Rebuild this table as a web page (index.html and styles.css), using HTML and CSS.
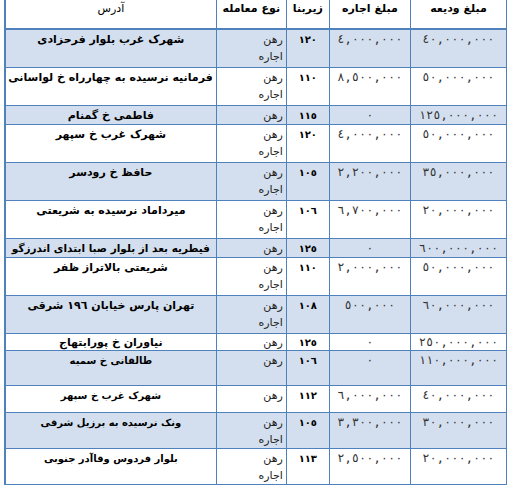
FILE: index.html
```html
<!DOCTYPE html>
<html lang="fa" dir="rtl">
<head>
<meta charset="utf-8">
<link rel="stylesheet" href="styles.css">
</head>
<body>
<table class="grid">
  <colgroup>
    <col class="c-dep"><col class="c-rent"><col class="c-area"><col class="c-type"><col class="c-addr">
  </colgroup>
  <thead>
    <tr class="head">
      <th>مبلغ ودیعه</th><th>مبلغ اجاره</th><th>زیربنا</th><th>نوع معامله</th><th class="plain">آدرس</th>
    </tr>
  </thead>
  <tbody>
    <tr class="alt two"><td class="num">٤٠,٠٠٠,٠٠٠</td><td class="num">٤,٠٠٠,٠٠٠</td><td class="area">١٢٠</td><td class="type">رهن<br>اجاره</td><td class="addr">شهرک غرب بلوار فرحزادی</td></tr>
    <tr class="two"><td class="num">٥٠,٠٠٠,٠٠٠</td><td class="num">٨,٥٠٠,٠٠٠</td><td class="area">١١٠</td><td class="type">رهن<br>اجاره</td><td class="addr">فرمانیه نرسیده به چهارراه خ لواسانی</td></tr>
    <tr class="alt one"><td class="num">١٢٥,٠٠٠,٠٠٠</td><td class="num">٠</td><td class="area">١١٥</td><td class="type">رهن</td><td class="addr">فاطمی خ گمنام</td></tr>
    <tr class="two"><td class="num">٥٠,٠٠٠,٠٠٠</td><td class="num">٤,٠٠٠,٠٠٠</td><td class="area">١٢٠</td><td class="type">رهن<br>اجاره</td><td class="addr">شهرک غرب خ سپهر</td></tr>
    <tr class="alt two"><td class="num">٣٥,٠٠٠,٠٠٠</td><td class="num">٢,٢٠٠,٠٠٠</td><td class="area">١٠٥</td><td class="type">رهن<br>اجاره</td><td class="addr">حافظ خ رودسر</td></tr>
    <tr class="two"><td class="num">٢٠,٠٠٠,٠٠٠</td><td class="num">٦,٧٠٠,٠٠٠</td><td class="area">١٠٦</td><td class="type">رهن<br>اجاره</td><td class="addr">میرداماد نرسیده به شریعتی</td></tr>
    <tr class="alt one"><td class="num">٦٠٠,٠٠٠,٠٠٠</td><td class="num">٠</td><td class="area">١٢٥</td><td class="type">رهن</td><td class="addr fit">فیطریه بعد از بلوار صبا ابتدای اندرزگو</td></tr>
    <tr class="two"><td class="num">٥٠,٠٠٠,٠٠٠</td><td class="num">٢,٠٠٠,٠٠٠</td><td class="area">١١٠</td><td class="type">رهن<br>اجاره</td><td class="addr">شریعتی بالاتراز ظفر</td></tr>
    <tr class="alt two"><td class="num">٦٠,٠٠٠,٠٠٠</td><td class="num">٥٠٠,٠٠٠</td><td class="area">١٠٨</td><td class="type">رهن<br>اجاره</td><td class="addr">تهران پارس خیابان ١٩٦ شرقی</td></tr>
    <tr class="short"><td class="num">٢٥٠,٠٠٠,٠٠٠</td><td class="num">٠</td><td class="area">١٢٥</td><td class="type">رهن</td><td class="addr">نیاوران خ پورابتهاج</td></tr>
    <tr class="alt tall"><td class="num">١١٠,٠٠٠,٠٠٠</td><td class="num">٠</td><td class="area">١٠٦</td><td class="type">رهن</td><td class="addr sm">طالقانی خ سمیه</td></tr>
    <tr class="mid"><td class="num">٤٠,٠٠٠,٠٠٠</td><td class="num">٦,٠٠٠,٠٠٠</td><td class="area">١١٢</td><td class="type">رهن</td><td class="addr sm">شهرک غرب خ سپهر</td></tr>
    <tr class="alt twob"><td class="num">٣٠,٠٠٠,٠٠٠</td><td class="num">٣,٣٠٠,٠٠٠</td><td class="area">١٠٥</td><td class="type">رهن<br>اجاره</td><td class="addr sm">ونک نرسیده به برزیل شرقی</td></tr>
    <tr class="twob"><td class="num">٢٠,٠٠٠,٠٠٠</td><td class="num">٢,٥٠٠,٠٠٠</td><td class="area">١١٣</td><td class="type">رهن<br>اجاره</td><td class="addr sm">بلوار فردوس وقاآدر جنوبی</td></tr>
  </tbody>
</table>
</body>
</html>
```

FILE: styles.css
```css
html, body {
  margin: 0;
  padding: 0;
  background: #ffffff;
}

body {
  font-family: "DejaVu Sans", sans-serif;
  color: #000;
}

.grid {
  direction: rtl;
  border-collapse: collapse;
  table-layout: fixed;
  width: 503px;
  margin: -1px 0 0 1px;
  border-left: 2px solid #4F81BD;
  border-right: 1px solid #4F81BD;
  border-bottom: 1px solid #4F81BD;
}

.c-dep { width: 96px; }
.c-rent { width: 81px; }
.c-area { width: 43px; }
.c-type { width: 70px; }
.c-addr { width: 211px; }

.grid th,
.grid td {
  border: 1px solid #4F81BD;
  padding: 1px 3px 0 3px;
  vertical-align: top;
  line-height: 17px;
  overflow: hidden;
  white-space: nowrap;
}

.grid th {
  height: 28px;
  font-size: 11px;
  font-weight: bold;
  text-align: center;
  padding-top: 1px;
  border-bottom: 2px solid #4F81BD;
  border-top: none;
}

.grid th.plain {
  font-weight: normal;
}

.alt td {
  background: #D3DFEE;
}

.two td { height: 36px; }
.twob td { height: 33.5px; }
.one td { height: 16px; }
.short td { height: 15px; line-height: 15px; }
.tall td { height: 33px; }
.mid td { height: 25px; }

.num {
  text-align: center;
  font-family: "DejaVu Sans Mono", "DejaVu Sans", monospace;
  font-size: 12px;
  color: #333;
}

.area {
  text-align: center;
  font-size: 10px;
  font-weight: bold;
}

.type {
  text-align: right;
  font-size: 11px;
  color: #222;
}

.addr {
  text-align: center;
  font-size: 11px;
  font-weight: bold;
}

.addr.fit {
  font-size: 10.5px;
  padding: 1px 0 0 0;
}

.addr.sm {
  font-size: 10px;
}
```
